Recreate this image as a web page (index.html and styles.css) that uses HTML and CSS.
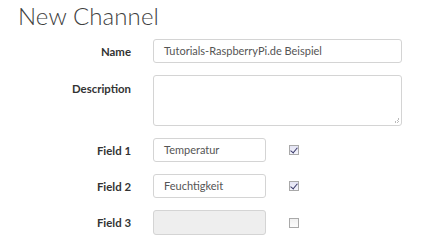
FILE: index.html
```html
<!DOCTYPE html>
<html>
<head>
<meta charset="utf-8">
<link rel="stylesheet" href="styles.css">
</head>
<body>
<h1 class="title">New Channel</h1>
<div class="form">
  <div class="row">
    <label class="label">Name</label>
    <div class="input wide">Tutorials-RaspberryPi.de Beispiel</div>
  </div>
  <div class="row row-top">
    <label class="label label-top">Description</label>
    <div class="textarea"><span class="grip"></span></div>
  </div>
  <div class="row">
    <label class="label">Field 1</label>
    <div class="input short">Temperatur</div>
    <span class="check checked"></span>
  </div>
  <div class="row">
    <label class="label">Field 2</label>
    <div class="input short">Feuchtigkeit</div>
    <span class="check checked"></span>
  </div>
  <div class="row">
    <label class="label">Field 3</label>
    <div class="input short disabled"></div>
    <span class="check"></span>
  </div>
</div>
</body>
</html>
```
FILE: styles.css
```css
html, body {
  margin: 0;
  padding: 0;
  background: #ffffff;
}
body {
  width: 430px;
  height: 240px;
  overflow: hidden;
  font-family: "Lato", "Open Sans", sans-serif;
}
.title {
  margin: 0;
  padding: 2px 0 0 18px;
  height: 37px;
  font-size: 24px;
  font-weight: 300;
  line-height: 28px;
  color: #3f3f3f;
  letter-spacing: 0.1px;
}
.form {
  display: flex;
  flex-direction: column;
  gap: 12px;
}
.row {
  display: grid;
  grid-template-columns: 131px auto 1fr;
  column-gap: 22px;
  align-items: center;
}
.row-top {
  align-items: start;
}
.label {
  text-align: right;
  font-size: 11.4px;
  font-weight: 700;
  color: #333;
}
.label-top {
  padding-top: 7px;
}
.input {
  box-sizing: border-box;
  height: 24px;
  border: 1px solid #d4d4d4;
  border-radius: 3px;
  padding: 0 10px;
  font-size: 11px;
  line-height: 22px;
  color: #555;
  background: #fff;
}
.wide {
  width: 249px;
}
.short {
  width: 113px;
}
.disabled {
  background: #eeeeee;
  height: 25px;
}
.textarea {
  box-sizing: border-box;
  position: relative;
  width: 249px;
  height: 51px;
  border: 1px solid #d4d4d4;
  border-radius: 3px;
}
.grip {
  position: absolute;
  right: 2px;
  bottom: 2px;
  width: 5px;
  height: 5px;
  background: linear-gradient(135deg, transparent 50%, #bbb 50%, #bbb 60%, transparent 60%, transparent 75%, #bbb 75%, #bbb 85%, transparent 85%);
}
.check {
  box-sizing: border-box;
  width: 10px;
  height: 10px;
  margin-left: 1px;
  border: 1px solid #a9a9a9;
  background: linear-gradient(#f0f0f0, #fcfcfc);
  position: relative;
}
.checked {
  background: linear-gradient(#e4e4f4, #f4f4fc);
}
.checked::after {
  content: "";
  position: absolute;
  left: 2px;
  top: 0px;
  width: 3px;
  height: 6px;
  border: solid #3a3a6a;
  border-width: 0 1.5px 1.5px 0;
  transform: rotate(40deg);
}
```
